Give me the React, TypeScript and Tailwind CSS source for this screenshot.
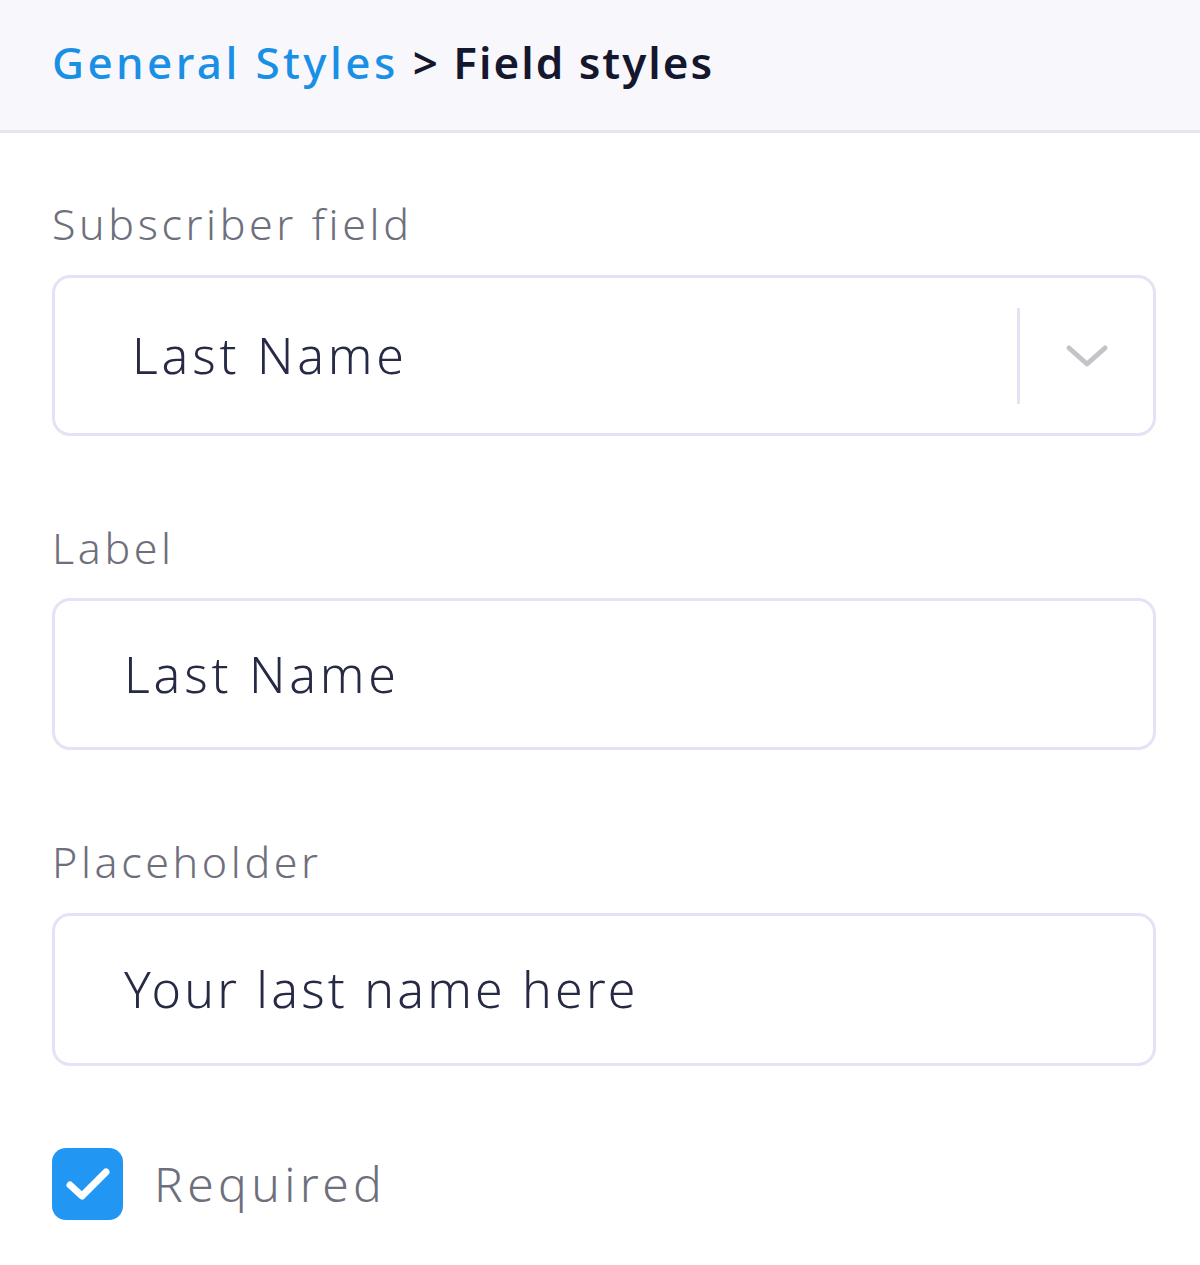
import React from "react";

const font = { fontFamily: '"Noto Sans", "Liberation Sans", sans-serif' };

function Label({ children }: { children: React.ReactNode }) {
  return (
    <div className="h-[60px] leading-[60px] text-[43px] font-light text-[#6e6f7c] tracking-[3.6px]">
      {children}
    </div>
  );
}

export default function App() {
  return (
    <div className="w-[1200px] h-[1265px] bg-white overflow-hidden" style={font}>
      <div className="h-[133px] bg-[#f8f8fc] border-b-[3px] border-[#e5e6ea] flex items-center pl-[52px] pb-[6px]">
        <span className="text-[44px] font-medium text-[#1a8fe6] tracking-[3.4px]">General Styles</span>
        <span className="text-[44px] font-semibold text-[#15172e] ml-[14px] tracking-[2px]">&gt; Field styles</span>
      </div>
      <div className="pl-[52px] pr-[44px] pt-[61px]">
        <Label>Subscriber field</Label>
        <div className="mt-[21px] h-[161px] rounded-[18px] border-[3px] border-[#e3e3f6] flex items-center">
          <div className="flex-1 pl-[77px] text-[50px] font-light text-[#272a44] tracking-[3.8px]">Last Name</div>
          <div className="w-[3px] h-[96px] bg-[#e3e3f6]" />
          <div className="w-[133px] flex items-center justify-center">
            <svg width="44" height="26" viewBox="0 0 44 26" fill="none">
              <path d="M4 5 L22 21 L40 5" stroke="#c4c4c8" strokeWidth="5" strokeLinecap="round" strokeLinejoin="round" />
            </svg>
          </div>
        </div>

        <div className="mt-[82px]">
          <Label>Label</Label>
        </div>
        <div className="mt-[20px] h-[152px] rounded-[18px] border-[3px] border-[#e3e3f6] flex items-center pl-[69px] text-[50px] font-light text-[#272a44] tracking-[3.8px]">
          Last Name
        </div>

        <div className="mt-[82px]">
          <Label>Placeholder</Label>
        </div>
        <div className="mt-[21px] h-[153px] rounded-[18px] border-[3px] border-[#e3e3f6] flex items-center pl-[69px] text-[50px] font-light text-[#272a44] tracking-[3.2px]">
          Your last name here
        </div>

        <div className="mt-[82px] flex items-center">
          <div className="w-[71px] h-[72px] rounded-[14px] bg-[#2196f3] flex items-center justify-center">
            <svg width="50" height="42" viewBox="0 0 50 42" fill="none">
              <path d="M7 22 L19 33 L43 9" stroke="white" strokeWidth="7" strokeLinecap="round" strokeLinejoin="round" />
            </svg>
          </div>
          <span className="ml-[31px] text-[48px] font-light text-[#6e6f7c] tracking-[4.4px]">Required</span>
        </div>
      </div>
    </div>
  );
}
